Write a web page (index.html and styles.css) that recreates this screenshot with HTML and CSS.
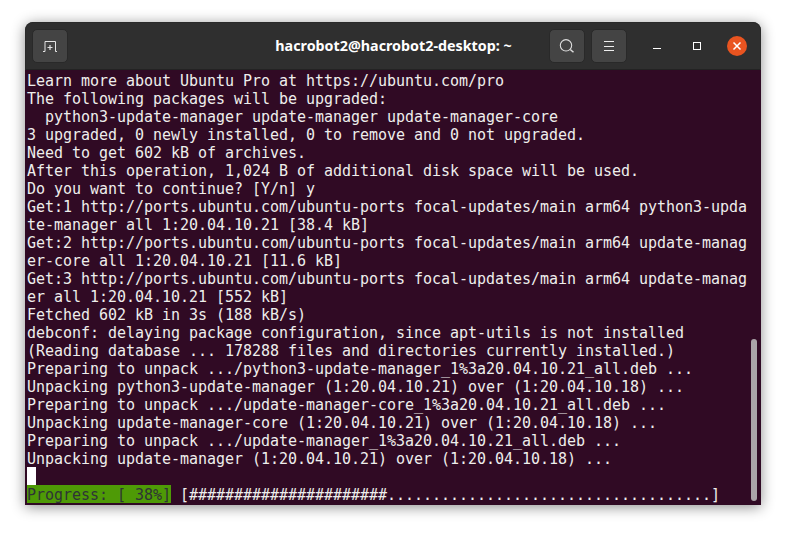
FILE: index.html
```html
<!DOCTYPE html>
<html lang="en">
<head>
<meta charset="utf-8">
<title>hacrobot2@hacrobot2-desktop: ~</title>
<link rel="stylesheet" href="styles.css">
</head>
<body>
<div class="window">
  <header class="titlebar">
    <button class="tool new-tab" aria-label="New tab">
      <svg width="16" height="16" viewBox="0 0 16 16" fill="none" stroke="#e4e4e4" stroke-width="1"><path d="M1 13.500h2V3.500h10.500v10h1.500"/><path d="M8 7v5M5.500 9.500h5" stroke-width="1.200"/></svg>
    </button>
    <div class="title">hacrobot2@hacrobot2-desktop: ~</div>
    <div class="tools">
      <button class="tool" aria-label="Search">
        <svg width="16" height="16" viewBox="0 0 16 16" fill="none" stroke="#ddd" stroke-width="1.100"><circle cx="7" cy="7.300" r="5.700"/><path d="M11.300 11.500l3.200 2.800" stroke-width="1.500"/></svg>
      </button>
      <button class="tool" aria-label="Menu">
        <svg width="16" height="16" viewBox="0 0 16 16" fill="none" stroke="#eee" stroke-width="1"><path d="M3 3.500h10M3 8.500h10M3 12.500h10"/></svg>
      </button>
    </div>
    <div class="controls">
      <span class="ctl"><svg width="10" height="10" viewBox="0 0 10 10"><path d="M1 7.500h8" stroke="#fff" stroke-width="1"/></svg></span>
      <span class="ctl"><svg width="10" height="10" viewBox="0 0 10 10" fill="none"><rect x="1.500" y="1.500" width="7" height="7" stroke="#fff" stroke-width="1"/></svg></span>
      <span class="close"><svg width="10" height="10" viewBox="0 0 10 10"><path d="M1.500 1.500l7 7M8.500 1.500l-7 7" stroke="#fff" stroke-width="1.500"/></svg></span>
    </div>
  </header>
  <div class="terminal">
    <pre class="output">Learn more about Ubuntu Pro at https://ubuntu.com/pro
The following packages will be upgraded:
  python3-update-manager update-manager update-manager-core
3 upgraded, 0 newly installed, 0 to remove and 0 not upgraded.
Need to get 602 kB of archives.
After this operation, 1,024 B of additional disk space will be used.
Do you want to continue? [Y/n] y
Get:1 http://ports.ubuntu.com/ubuntu-ports focal-updates/main arm64 python3-upda
te-manager all 1:20.04.10.21 [38.4 kB]
Get:2 http://ports.ubuntu.com/ubuntu-ports focal-updates/main arm64 update-manag
er-core all 1:20.04.10.21 [11.6 kB]
Get:3 http://ports.ubuntu.com/ubuntu-ports focal-updates/main arm64 update-manag
er all 1:20.04.10.21 [552 kB]
Fetched 602 kB in 3s (188 kB/s)
debconf: delaying package configuration, since apt-utils is not installed
(Reading database ... 178288 files and directories currently installed.)
Preparing to unpack .../python3-update-manager_1%3a20.04.10.21_all.deb ...
Unpacking python3-update-manager (1:20.04.10.21) over (1:20.04.10.18) ...
Preparing to unpack .../update-manager-core_1%3a20.04.10.21_all.deb ...
Unpacking update-manager-core (1:20.04.10.21) over (1:20.04.10.18) ...
Preparing to unpack .../update-manager_1%3a20.04.10.21_all.deb ...
Unpacking update-manager (1:20.04.10.21) over (1:20.04.10.18) ...
<span class="cursor"> </span>
<span class="progress">Progress: [ 38%]</span> [######################....................................]</pre>
    <div class="scrollbar"></div>
  </div>
</div>
</body>
</html>
```
FILE: styles.css
```css
html, body {
  margin: 0;
  height: 100%;
  background: #fff;
}
body {
  padding: 22px 25px 0;
  box-sizing: border-box;
  overflow: hidden;
}
.window {
  width: 736px;
  height: 483px;
  display: flex;
  flex-direction: column;
  border-radius: 8px 8px 0 0;
  overflow: hidden;
  box-shadow: 0 2px 14px rgba(0, 0, 0, 0.45);
  outline: 1px solid #2a2a2a;
  outline-offset: -1px;
}
.titlebar {
  flex: 0 0 48px;
  box-sizing: border-box;
  height: 48px;
  display: flex;
  align-items: center;
  background: #2f2f2f;
  padding: 1px 0 0 7px;
  border-bottom: 1px solid #232323;
}
.tool {
  width: 36px;
  height: 34px;
  padding: 0;
  display: flex;
  align-items: center;
  justify-content: center;
  background: #444;
  border: 1px solid #292929;
  border-radius: 5px;
}
.title {
  flex: 1;
  text-align: center;
  padding: 0 0 2px 170px;
  color: #fff;
  font: 700 14.300px "Noto Sans", sans-serif;
}
.tools {
  display: flex;
  gap: 6px;
}
.controls {
  display: flex;
  align-items: center;
  margin-left: 10px;
  margin-right: 14px;
}
.ctl {
  width: 40px;
  display: flex;
  justify-content: center;
}
.close {
  width: 20px;
  height: 20px;
  margin-left: 10px;
  border-radius: 50%;
  background: #e95420;
  display: flex;
  align-items: center;
  justify-content: center;
}
.terminal {
  flex: 1;
  position: relative;
  background: #300a24;
  overflow: hidden;
  padding: 2px 0 0 2px;
}
.output {
  margin: 0;
  color: #eeeeec;
  font: 15px/18px "DejaVu Sans Mono", monospace;
  letter-spacing: -0.03px;
  white-space: pre;
}
.cursor {
  display: inline-block;
  width: 9px;
  height: 18px;
  background: #fff;
  transform: translateY(-1px);
}
.progress {
  padding-top: 1px;
  background: linear-gradient(#4e9a06, #4e9a06) 0 0 / 100% 18px no-repeat;
  color: #2e3436;
}
.scrollbar {
  position: absolute;
  right: 4px;
  top: 269px;
  width: 6px;
  height: 162px;
  border-radius: 3px;
  background: #aaa4a8;
}
```
